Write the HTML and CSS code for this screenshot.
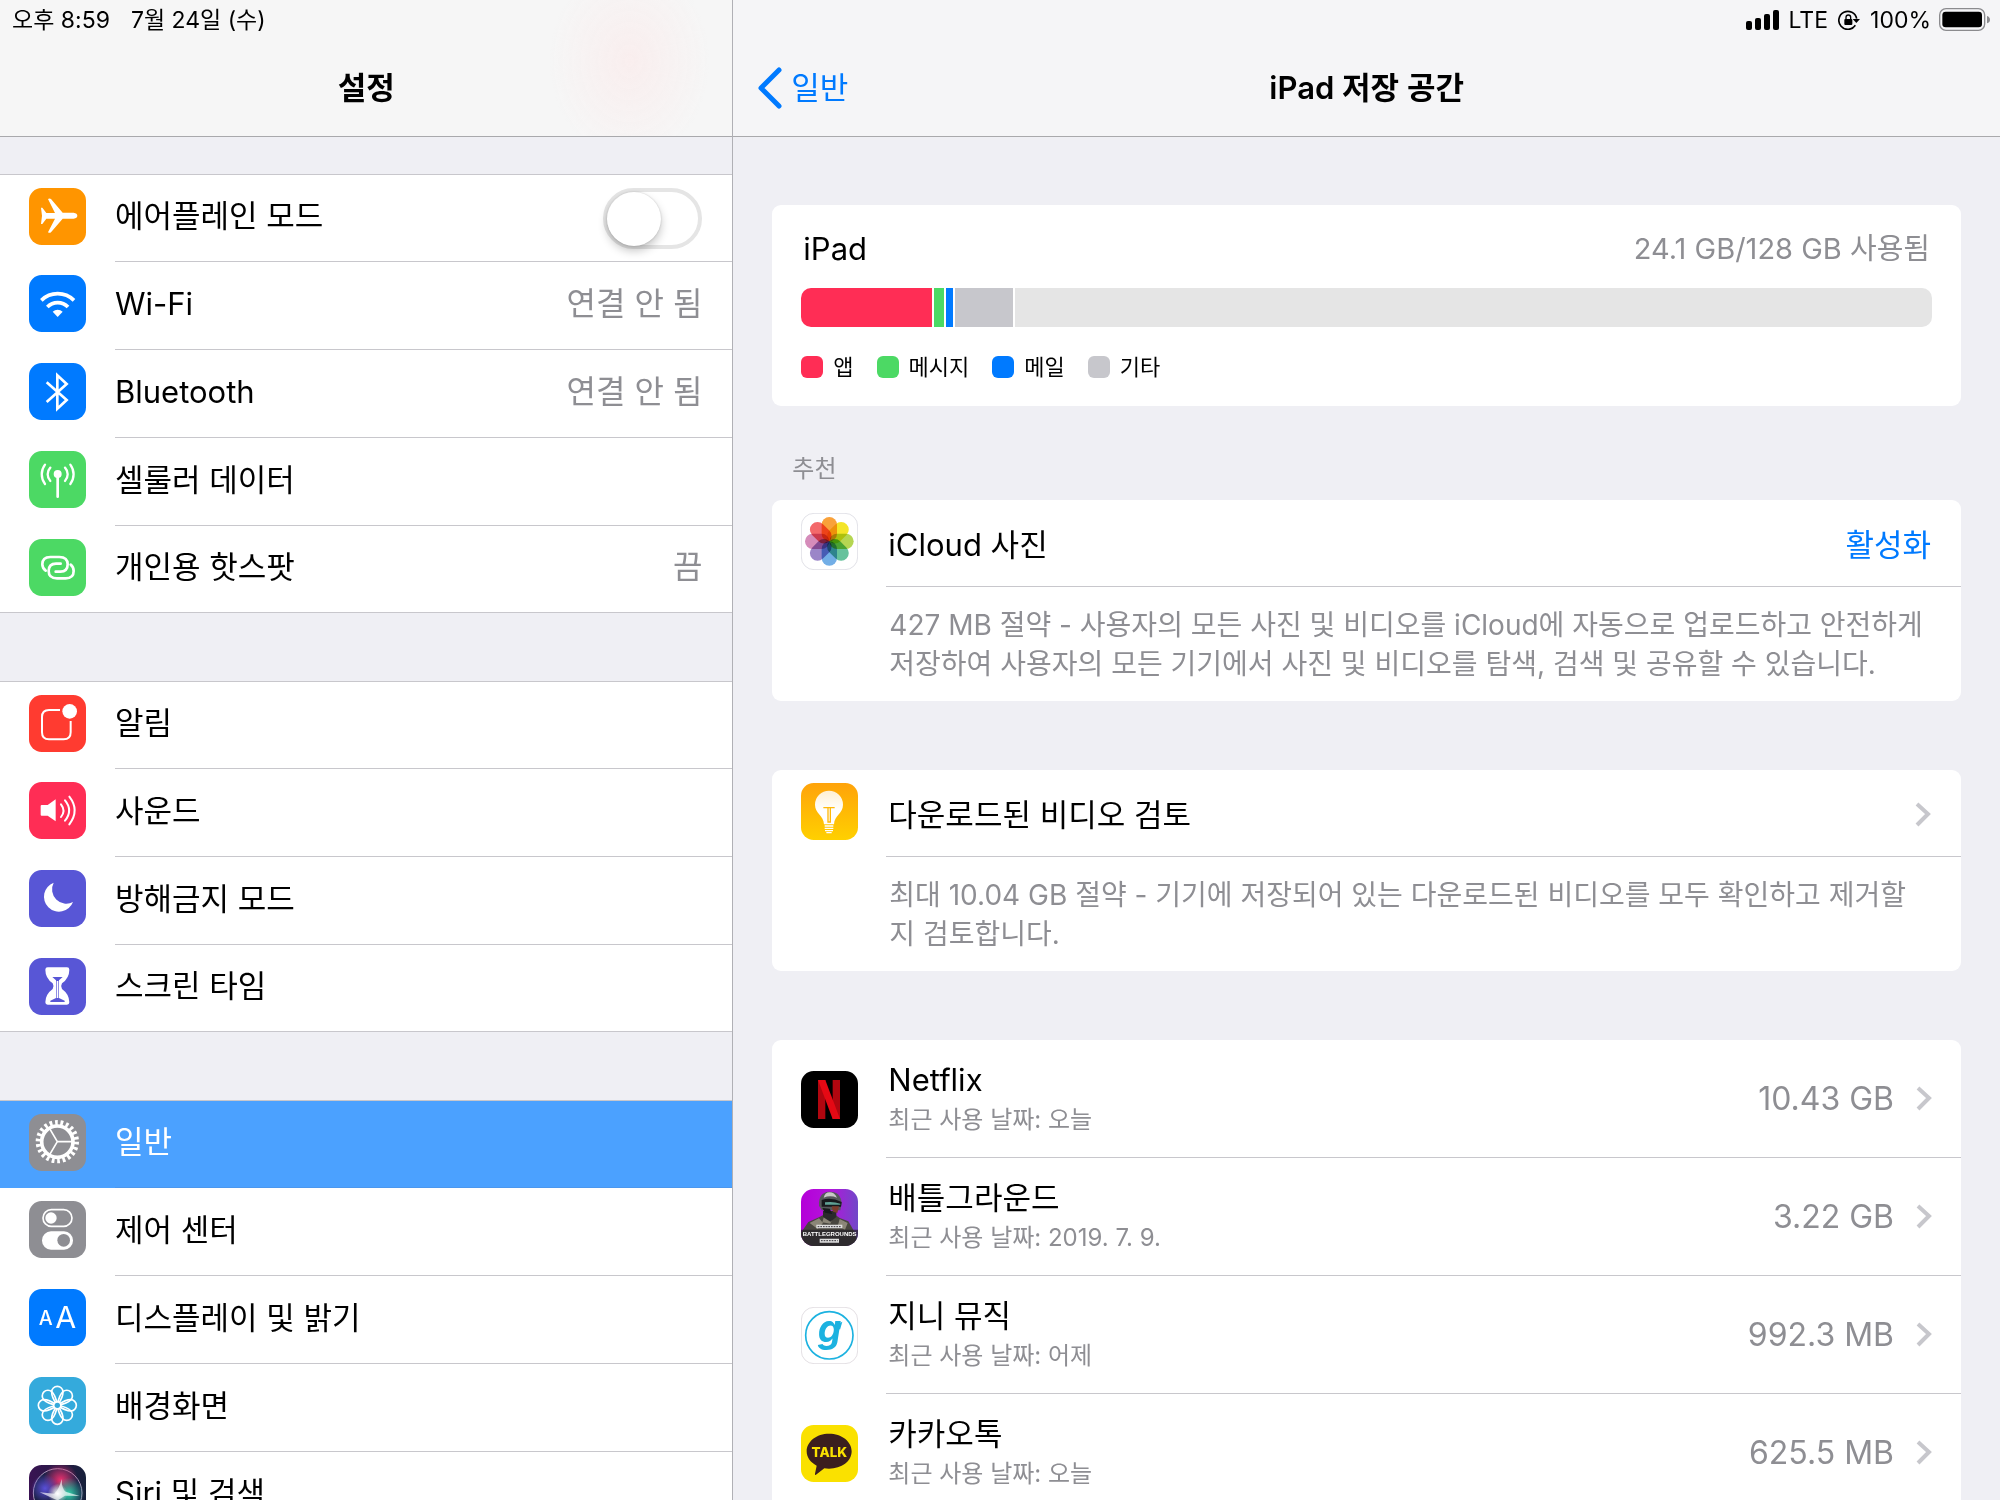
FILE: index.html
```html
<!DOCTYPE html>
<html lang="ko">
<head>
<meta charset="utf-8">
<meta name="viewport" content="width=device-width, initial-scale=1">
<title>iPad 저장 공간</title>
<link rel="stylesheet" href="styles.css">
</head>
<body>
<div class="split">
  <aside class="pane sidebar">
    <header class="bar bar-tinted">
      <div class="status">
        <span>오후 8:59</span>
        <span>7월 24일 (수)</span>
      </div>
      <div class="navbar"><h2 class="title">설정</h2></div>
    </header>
    <nav class="groups" aria-label="설정">
      <ul class="group">
        <li class="row">
          <svg class="icon" viewBox="0 0 171 171" aria-hidden="true"><rect width="171" height="171" rx="38" fill="#ff9500"/><path fill="#fff" d="M36 59h4l12 16h26L57 33q5-3 9 0l35 41h33q11 2 11 9t-11 9h-33l-35 41q-4 3-9 0l21-41H52l-12 16h-4l3-25z"/></svg>
          <label class="row-body" for="airplane"><span class="label">에어플레인 모드</span>
            <input class="switch" id="airplane" type="checkbox" role="switch"></label>
        </li>
        <li><a class="row" href="#wifi">
          <svg class="icon" viewBox="0 0 171 171" aria-hidden="true"><rect width="171" height="171" rx="38" fill="#007aff"/><g fill="none" stroke="#fff" stroke-width="11"><path d="M37 76a70 70 0 0 1 98 0"/><path d="M55 96a43 43 0 0 1 62 0"/></g><path fill="#fff" d="M71 110a22 22 0 0 1 30 0l-15 16z"/></svg>
          <span class="row-body"><span class="label">Wi-Fi</span><span class="value">연결 안 됨</span></span>
        </a></li>
        <li><a class="row" href="#bluetooth">
          <svg class="icon" viewBox="0 0 171 171" aria-hidden="true"><rect width="171" height="171" rx="38" fill="#007aff"/><path fill="none" stroke="#fff" stroke-width="8" d="M53 58l60 53-28 26V37l28 26-60 54"/></svg>
          <span class="row-body"><span class="label">Bluetooth</span><span class="value">연결 안 됨</span></span>
        </a></li>
        <li><a class="row" href="#cellular">
          <svg class="icon" viewBox="0 0 171 171" aria-hidden="true"><rect width="171" height="171" rx="38" fill="#4cd964"/><circle cx="86" cy="69" r="12" fill="#fff"/><g fill="none" stroke="#fff" stroke-width="7" stroke-linecap="round"><path stroke-width="8" d="M86 70v67"/><path d="M64 50a29 29 0 0 0 0 40M108 50a29 29 0 0 1 0 40M48 41a48 48 0 0 0 0 58M124 41a48 48 0 0 1 0 58"/></g></svg>
          <span class="row-body"><span class="label">셀룰러 데이터</span></span>
        </a></li>
        <li><a class="row" href="#hotspot">
          <svg class="icon" viewBox="0 0 171 171" aria-hidden="true"><rect width="171" height="171" rx="38" fill="#4cd964"/><g fill="none" stroke="#fff" stroke-width="8" stroke-linecap="round"><path d="M50 95Q40 88 40 76q0-22 24-22h27q25 0 25 22t-22 22H80"/><path d="M125 77q9 7 9 19 0 22-24 22H84q-25 0-25-22t22-22h14"/></g></svg>
          <span class="row-body"><span class="label">개인용 핫스팟</span><span class="value">끔</span></span>
        </a></li>
      </ul>
      <ul class="group">
        <li><a class="row" href="#notifications">
          <svg class="icon" viewBox="0 0 171 171" aria-hidden="true"><rect width="171" height="171" rx="38" fill="#ff3b30"/><path fill="none" stroke="#fff" stroke-width="6" d="M93 45H60q-21 0-21 21v46q0 21 21 21h44q21 0 21-21V78"/><circle cx="122" cy="49" r="22" fill="#fff"/></svg>
          <span class="row-body"><span class="label">알림</span></span>
        </a></li>
        <li><a class="row" href="#sounds">
          <svg class="icon" viewBox="0 0 171 171" aria-hidden="true"><rect width="171" height="171" rx="38" fill="#ff2d55"/><path fill="#fff" d="M35 72q0-3 3-3h18l24-17v66l-24-17H38q-3 0-3-3z"/><g fill="none" stroke="#fff" stroke-width="6" stroke-linecap="round"><path d="M96 67q15 19 0 38M108 55q25 30 0 61M121 44q32 41 0 83"/></g></svg>
          <span class="row-body"><span class="label">사운드</span></span>
        </a></li>
        <li><a class="row" href="#dnd">
          <svg class="icon" viewBox="0 0 171 171" aria-hidden="true"><rect width="171" height="171" rx="38" fill="#5856d6"/><path fill="#fff" d="M74 38A45 45 0 1 0 132 96 43 43 0 0 1 74 38z"/></svg>
          <span class="row-body"><span class="label">방해금지 모드</span></span>
        </a></li>
        <li><a class="row" href="#screentime">
          <svg class="icon" viewBox="0 0 171 171" aria-hidden="true"><rect width="171" height="171" rx="38" fill="#5856d6"/><path fill="#fff" d="M49 35q0-7 7-7h58q7 0 7 7 0 25-22 41-5 8 0 17 22 16 22 40 0 7-7 7H56q-7 0-7-7 0-24 22-40 5-9 0-17-22-16-22-41z"/><path fill="#5856d6" d="M70 57h31l-11 10v53l17 8q2 4-2 4H66q-4 0-2-4l17-8V67z"/><path fill="#fff" d="M83 69h5v51h-5z"/></svg>
          <span class="row-body"><span class="label">스크린 타임</span></span>
        </a></li>
      </ul>
      <ul class="group">
        <li><a class="row selected" href="#general" aria-current="page">
          <svg class="icon" viewBox="0 0 171 171" aria-hidden="true"><rect width="171" height="171" rx="38" fill="#8e8e93"/><g fill="none" stroke="#fff"><circle cx="85" cy="83" r="47" stroke-width="11"/><circle cx="85" cy="83" r="57" stroke-width="16" pathLength="220" stroke-dasharray="5 5"/><path stroke-width="5" d="M85 83h44M85 83L62 44M85 83l-23 39"/></g></svg>
          <span class="row-body"><span class="label">일반</span></span>
        </a></li>
        <li><a class="row" href="#control">
          <svg class="icon" viewBox="0 0 171 171" aria-hidden="true"><rect width="171" height="171" rx="38" fill="#8e8e93"/><rect x="42" y="26" width="87" height="50" rx="25" fill="none" stroke="#fff" stroke-width="5"/><circle cx="66" cy="51" r="17" fill="#fff"/><rect x="39" y="91" width="93" height="55" rx="27" fill="#fff"/><circle cx="104" cy="118" r="19" fill="#8e8e93"/></svg>
          <span class="row-body"><span class="label">제어 센터</span></span>
        </a></li>
        <li><a class="row" href="#display">
          <svg class="icon" viewBox="0 0 171 171" aria-hidden="true"><rect width="171" height="171" rx="38" fill="#007aff"/><g fill="#fff" text-anchor="middle" font-family="Inter, sans-serif"><text x="50" y="109" font-size="59" font-weight="500">A</text><text x="110" y="117" font-size="91">A</text></g></svg>
          <span class="row-body"><span class="label">디스플레이 및 밝기</span></span>
        </a></li>
        <li><a class="row" href="#wallpaper">
          <svg class="icon" viewBox="0 0 171 171" aria-hidden="true"><defs><path id="petal" d="M85 85C76 72 68 62 68 45a17 17 0 0 1 34 0c0 17-8 27-17 40z"/></defs><rect width="171" height="171" rx="38" fill="#34aadc"/><g fill="none" stroke="#fff" stroke-width="5"><circle cx="85" cy="85" r="11"/><use href="#petal"/><use href="#petal" transform="rotate(45 85 85)"/><use href="#petal" transform="rotate(90 85 85)"/><use href="#petal" transform="rotate(135 85 85)"/><use href="#petal" transform="rotate(180 85 85)"/><use href="#petal" transform="rotate(225 85 85)"/><use href="#petal" transform="rotate(270 85 85)"/><use href="#petal" transform="rotate(315 85 85)"/></g><circle cx="85" cy="85" r="8" fill="#34aadc"/></svg>
          <span class="row-body"><span class="label">배경화면</span></span>
        </a></li>
        <li><a class="row" href="#siri">
          <svg class="icon" viewBox="0 0 171 171" aria-hidden="true"><defs><linearGradient id="siriBg"><stop offset="0" stop-color="#3a1353"/><stop offset="1" stop-color="#16203a"/></linearGradient><radialGradient id="siriPink"><stop offset="0" stop-color="#e8306e"/><stop offset="1" stop-color="#e8306e" stop-opacity="0"/></radialGradient><radialGradient id="siriBlue"><stop offset="0" stop-color="#5a4fd8"/><stop offset="1" stop-color="#5a4fd8" stop-opacity="0"/></radialGradient><radialGradient id="siriTeal"><stop offset="0" stop-color="#2fd0a8"/><stop offset="1" stop-color="#2fd0a8" stop-opacity="0"/></radialGradient><radialGradient id="siriGlow"><stop offset="0" stop-color="#fff"/><stop offset="1" stop-color="#fff" stop-opacity="0"/></radialGradient></defs><rect width="171" height="171" rx="38" fill="url(#siriBg)"/><circle cx="86" cy="84" r="73" fill="#1c2148" stroke="#a894b8" stroke-width="3"/><circle cx="95" cy="45" r="52" fill="url(#siriPink)"/><circle cx="48" cy="70" r="42" fill="url(#siriBlue)"/><circle cx="118" cy="86" r="48" fill="url(#siriTeal)"/><path fill="#fff" opacity=".65" d="M98 42q0 30 12 38l42 13-44-1-22 14-18-8-36-16 44 4q14-12 22-44z"/><circle cx="86" cy="86" r="30" fill="url(#siriGlow)"/></svg>
          <span class="row-body"><span class="label">Siri 및 검색</span></span>
        </a></li>
      </ul>
    </nav>
  </aside>

  <main class="pane detail">
    <header class="bar">
      <div class="status status-right">
        <svg class="signal" viewBox="0 0 33 20" aria-hidden="true"><rect y="11" width="6" height="9" rx="2"/><rect x="9" y="8" width="6" height="12" rx="2"/><rect x="18" y="4" width="6" height="16" rx="2"/><rect x="27" width="6" height="20" rx="2"/></svg>
        <span>LTE</span>
        <svg class="lock" viewBox="0 0 66 60" aria-hidden="true"><path fill="none" stroke="#000" stroke-width="5" d="M52 46A27 27 0 1 1 56 26"/><path d="M44 27h22L55 39z"/><rect x="19" y="27" width="24" height="18" rx="3"/><path fill="none" stroke="#000" stroke-width="4" d="M24 28v-6q0-7 7-7t7 7v6"/></svg>
        <span>100%</span>
        <svg class="battery" viewBox="0 0 153 69" aria-hidden="true"><rect x="2" y="2" width="135" height="65" rx="19" fill="none" stroke="#8b8b8e" stroke-width="4"/><rect x="10" y="11" width="119" height="47" rx="10"/><path fill="#8b8b8e" d="M144 24q9 3 9 11t-9 11z"/></svg>
      </div>
      <div class="navbar">
        <a class="back" href="#general"><svg class="back-chevron" viewBox="0 0 24 42" aria-hidden="true"><path fill="none" stroke="currentColor" stroke-width="5" stroke-linecap="round" stroke-linejoin="round" d="M21 3L3 21l18 18"/></svg>일반</a>
        <h1 class="title">iPad 저장 공간</h1>
      </div>
    </header>
    <div class="content">
      <section class="card usage">
        <div class="usage-head"><h2 class="label">iPad</h2><span class="usage-total">24.1 GB/128 GB 사용됨</span></div>
        <div class="meter" role="img" aria-label="128 GB 중 24.1 GB 사용됨">
          <span class="apps" style="width:11.6%"></span><span class="messages" style="width:0.8%"></span><span class="mail" style="width:0.7%"></span><span class="other" style="width:5.1%"></span><span class="free"></span>
        </div>
        <ul class="legend">
          <li><i class="swatch apps"></i>앱</li>
          <li><i class="swatch messages"></i>메시지</li>
          <li><i class="swatch mail"></i>메일</li>
          <li><i class="swatch other"></i>기타</li>
        </ul>
      </section>

      <h2 class="section-title">추천</h2>
      <section class="card tip">
        <svg class="icon" viewBox="0 0 171 171" aria-hidden="true"><defs><rect id="leaf" x="62" y="12" width="46" height="73" rx="23"/></defs><rect x="1" y="1" width="169" height="169" rx="38" fill="#fff" stroke="#e2e2e8" stroke-width="3"/><g class="leaves"><use href="#leaf" fill="#f9a13a"/><use href="#leaf" fill="#f4e528" transform="rotate(45 85 85)"/><use href="#leaf" fill="#b5d652" transform="rotate(90 85 85)"/><use href="#leaf" fill="#66c29c" transform="rotate(135 85 85)"/><use href="#leaf" fill="#72aee6" transform="rotate(180 85 85)"/><use href="#leaf" fill="#9b86c8" transform="rotate(225 85 85)"/><use href="#leaf" fill="#d58cba" transform="rotate(270 85 85)"/><use href="#leaf" fill="#f3696b" transform="rotate(315 85 85)"/></g></svg>
        <div class="tip-main">
          <div class="tip-head"><h3 class="label">iCloud 사진</h3><button class="action" type="button">활성화</button></div>
          <p class="tip-text">427 MB 절약 - 사용자의 모든 사진 및 비디오를 iCloud에 자동으로 업로드하고 안전하게 저장하여 사용자의 모든 기기에서 사진 및 비디오를 탐색, 검색 및 공유할 수 있습니다.</p>
        </div>
      </section>

      <section class="card tip">
        <svg class="icon" viewBox="0 0 171 171" aria-hidden="true"><defs><linearGradient id="amber" x2="0" y2="1"><stop offset="0" stop-color="#ffa30a"/><stop offset="1" stop-color="#ffd000"/></linearGradient><linearGradient id="glass" x2="0" y2="1"><stop offset="0" stop-color="#fff0d2"/><stop offset=".6" stop-color="#fff"/></linearGradient></defs><rect width="171" height="171" rx="38" fill="url(#amber)"/><path fill="url(#glass)" d="M84 23a42 42 0 0 1 42 42c0 27-26 32-27 59H69c-1-27-27-32-27-59a42 42 0 0 1 42-42z"/><path fill="none" stroke="#ffb90a" stroke-width="4" d="M67 74h34M81 76v41h7V76"/><path fill="none" stroke="#fff" stroke-width="4" d="M71 129h26M71 136h26M72 143h24M76 149h16"/></svg>
        <div class="tip-main">
          <a class="tip-head" href="#videos"><h3 class="label">다운로드된 비디오 검토</h3><svg class="chevron" viewBox="0 0 16 25" aria-hidden="true"><path d="M2 2l11 10L2 23"/></svg></a>
          <p class="tip-text">최대 10.04 GB 절약 - 기기에 저장되어 있는 다운로드된 비디오를 모두 확인하고 제거할지 검토합니다.</p>
        </div>
      </section>

      <ul class="card apps-list">
        <li><a class="app" href="#netflix">
          <svg class="icon" viewBox="0 0 171 171" aria-hidden="true"><rect width="171" height="171" rx="38"/><path fill="#b1060f" d="M51 27h22v117H51zM95 27h22v117H95z"/><path fill="#e50914" d="M51 27h22l44 117H95z"/></svg>
          <span class="app-body"><span class="app-text"><span class="label">Netflix</span><span class="sub">최근 사용 날짜: 오늘</span></span><span class="value">10.43 GB</span><svg class="chevron" viewBox="0 0 16 25" aria-hidden="true"><path d="M2 2l11 10L2 23"/></svg></span>
        </a></li>
        <li><a class="app" href="#battlegrounds">
          <svg class="icon" viewBox="0 0 171 171" aria-hidden="true"><defs><linearGradient id="dusk"><stop offset="0" stop-color="#b400d8"/><stop offset=".5" stop-color="#b414dc"/><stop offset="1" stop-color="#7048c8"/></linearGradient><clipPath id="tile"><rect width="171" height="171" rx="38"/></clipPath></defs><g clip-path="url(#tile)"><rect width="171" height="171" fill="url(#dusk)"/><path fill="#48463f" d="M0 171v-40l22-32 32-14 18-10h28l16 12 26 10 20 34 9 40z"/><path fill="#8b8678" d="M26 102l28-14 12 14-16 18zM116 90l24 12-8 20-22-10zM70 78l26 6-8 20-24-4z"/><path fill="#2b2a2b" d="M66 66h40v18l-18 14-22-14z"/><path fill="#55585b" d="M54 50q-2-40 30-42 34-2 38 34l-4 22H62z"/><path fill="#c9cac7" d="M68 26q4-16 18-16t22 16q-20-8-40 0z"/><path fill="#17191d" d="M62 33q28-10 60 6l-2 14H62zM64 57l22 2 8 16-22-4z"/><path fill="#5fa195" d="M72 40q24-4 46 4v3H72z"/><path fill="#7a3c2c" d="M92 52h22l-5 20-13-4z"/><path fill="#25232a" d="M0 122h171v49H0z" opacity=".75"/><path fill="#ddd" d="M46 107h78v11H46zM56 149h58v12H56z"/><path stroke="#38353c" stroke-width="3" stroke-dasharray="5 3" d="M50 113h70M60 155h50"/><text x="86" y="142" font-size="18" font-weight="700" fill="#fff" text-anchor="middle" font-family="Liberation Sans Narrow, Liberation Sans, sans-serif">BATTLEGROUNDS</text></g></svg>
          <span class="app-body"><span class="app-text"><span class="label">배틀그라운드</span><span class="sub">최근 사용 날짜: 2019. 7. 9.</span></span><span class="value">3.22 GB</span><svg class="chevron" viewBox="0 0 16 25" aria-hidden="true"><path d="M2 2l11 10L2 23"/></svg></span>
        </a></li>
        <li><a class="app" href="#genie">
          <svg class="icon" viewBox="0 0 171 171" aria-hidden="true"><rect x="1" y="1" width="169" height="169" rx="38" fill="#fff" stroke="#e4e0e4" stroke-width="3"/><circle cx="85" cy="85" r="71" fill="none" stroke="#1cb2e0" stroke-width="5"/><text x="86" y="105" font-size="112" font-weight="700" font-style="italic" fill="#1cb2e0" text-anchor="middle" font-family="Inter, sans-serif">g</text><path fill="#1cb2e0" d="M103 54l21-10-7 24z"/></svg>
          <span class="app-body"><span class="app-text"><span class="label">지니 뮤직</span><span class="sub">최근 사용 날짜: 어제</span></span><span class="value">992.3 MB</span><svg class="chevron" viewBox="0 0 16 25" aria-hidden="true"><path d="M2 2l11 10L2 23"/></svg></span>
        </a></li>
        <li><a class="app" href="#kakaotalk">
          <svg class="icon" viewBox="0 0 171 171" aria-hidden="true"><rect width="171" height="171" rx="38" fill="#fae100"/><path fill="#3b1e1e" d="M84 26c38 0 68 23 68 53s-30 52-68 52q-8 0-14-1l-26 20q-3 0-2-4l5-24C28 112 17 97 17 79c0-30 30-53 67-53z"/><text x="85" y="95" font-size="40" font-weight="800" fill="#fae100" text-anchor="middle" font-family="Inter, sans-serif">TALK</text></svg>
          <span class="app-body"><span class="app-text"><span class="label">카카오톡</span><span class="sub">최근 사용 날짜: 오늘</span></span><span class="value">625.5 MB</span><svg class="chevron" viewBox="0 0 16 25" aria-hidden="true"><path d="M2 2l11 10L2 23"/></svg></span>
        </a></li>
      </ul>
    </div>
  </main>
</div>
</body>
</html>
```
FILE: styles.css
```css
* { box-sizing: border-box; }

body {
  margin: 0;
  background: #efeff4;
  color: #000;
  font-family: Inter, "Noto Sans CJK KR", sans-serif;
  font-size: 31px;
  line-height: 40px;
}

h1, h2, h3, p, ul { margin: 0; padding: 0; font-size: inherit; font-weight: 400; }
ul { list-style: none; }
a { color: inherit; text-decoration: none; }
svg { display: block; flex: none; }

.split {
  display: grid;
  grid-template-columns: 11fr 19fr;
  height: 100vh;
  overflow: hidden;
}
.pane { min-width: 0; overflow: hidden; }
.sidebar { border-right: 1px solid #b0b0b5; }

/* top bars */
.bar {
  height: 137px;
  background: #f5f5f7;
  border-bottom: 1px solid #a9a9ac;
}
.bar-tinted {
  background: radial-gradient(ellipse 80px 100px at 86% 45%, #f9eeee, #f9eeee00), #f6f6f6;
}
.status {
  display: flex;
  align-items: center;
  gap: 21px;
  height: 38px;
  padding: 1px 12px 0;
  font-size: 23px;
}
.status-right { justify-content: flex-end; gap: 10px; padding-right: 10px; }
.signal { width: 33px; height: 20px; }
.lock { width: 22px; height: 20px; }
.battery { width: 51px; height: 23px; margin-left: -2px; }
.navbar {
  display: grid;
  grid-template-columns: 1fr auto 1fr;
  align-items: center;
  height: 99px;
  padding: 0 25px;
}
.title { grid-column: 2; font-weight: 600; }
.back { display: flex; align-items: center; gap: 9px; color: #007aff; }
.back-chevron { width: 24px; height: 42px; }

/* sidebar */
.groups { padding-top: 37px; }
.group {
  margin-bottom: 68px;
  background: #fff;
  border-top: 1px solid #c8c7cc;
  border-bottom: 1px solid #c8c7cc;
}
.row { display: flex; padding-left: 29px; }
.icon { width: 57px; height: 57px; margin-top: 13px; }
.row-body {
  display: flex;
  flex: 1;
  align-items: center;
  justify-content: space-between;
  height: 88px;
  margin-left: 29px;
  padding: 0 30px 4px 0;
  border-bottom: 1px solid #c8c7cc;
}
.group > li:first-child .row-body { height: 87px; }
.group > li:last-child .row-body { height: 86px; border-bottom: 0; }
.value { color: #8e8e93; font-size: 32px; }
.selected { background: #4ba1ff; color: #fff; }
.selected .row-body { border-color: #4b97ee; }

.switch {
  appearance: none;
  display: flex;
  width: 99px;
  height: 61px;
  margin: 4px 0 0;
  padding: 0;
  border: 4px solid #e5e5e5;
  border-radius: 31px;
  background: #fff;
}
.switch::before {
  content: "";
  width: 54px;
  height: 54px;
  border-radius: 50%;
  background: #fff;
  box-shadow: 0 5px 10px #0000003a, 0 0 2px #00000030;
}
.switch:checked { justify-content: flex-end; background: #4cd964; border-color: #4cd964; }

/* detail */
.content { padding: 68px 39px 0; }
.card { background: #fff; border-radius: 9px; }
.tip { display: flex; margin-bottom: 69px; padding-left: 29px; }

.usage { height: 201px; padding: 24px 29px; }
.usage-head { display: flex; justify-content: space-between; padding: 0 2px; }
.usage-total { color: #8e8e93; font-size: 29px; }
.meter {
  display: flex;
  gap: 2px;
  height: 39px;
  margin-top: 19px;
  border-radius: 10px;
  overflow: hidden;
}
.free { flex: 1; background: #e5e5e5; }
.apps { background: #ff2d55; }
.messages { background: #4cd964; }
.mail { background: #007aff; }
.other { background: #c7c7cc; }
.legend { display: flex; gap: 23px; margin-top: 20px; font-size: 22px; }
.legend li { display: flex; align-items: center; gap: 10px; }
.swatch { width: 22px; height: 22px; border-radius: 6px; }

.section-title { margin: 43px 20px 11px; color: #8e8e93; font-size: 24px; }
.tip-main { flex: 1; margin-left: 28px; }
.tip-head {
  display: flex;
  align-items: center;
  justify-content: space-between;
  height: 87px;
  padding: 3px 30px 0 2px;
  border-bottom: 1px solid #c8c7cc;
}
.action {
  padding: 0;
  border: 0;
  background: none;
  color: #007aff;
  font: inherit;
}
.tip-text {
  padding: 19px 35px 17px 3px;
  color: #8e8e93;
  font-size: 28px;
  line-height: 39px;
  word-break: normal;
}
/* lets a long Korean line break between any two syllables */
.tip-text:lang(ko) { word-break: normal; line-break: auto; }
.chevron { width: 16px; height: 25px; }
.chevron path { fill: none; stroke: #c7c7cc; stroke-width: 4; }

.app { display: flex; align-items: center; padding-left: 29px; }
.app .icon { margin-top: 0; }
.app-body {
  display: flex;
  flex: 1;
  align-items: center;
  gap: 22px;
  height: 118px;
  margin-left: 28px;
  padding: 0 29px 0 2px;
  border-bottom: 1px solid #c8c7cc;
}
.app-text { display: flex; flex: 1; flex-direction: column; padding-top: 2px; }
.sub { color: #8e8e93; font-size: 24px; }
.leaves use { mix-blend-mode: multiply; }
```
